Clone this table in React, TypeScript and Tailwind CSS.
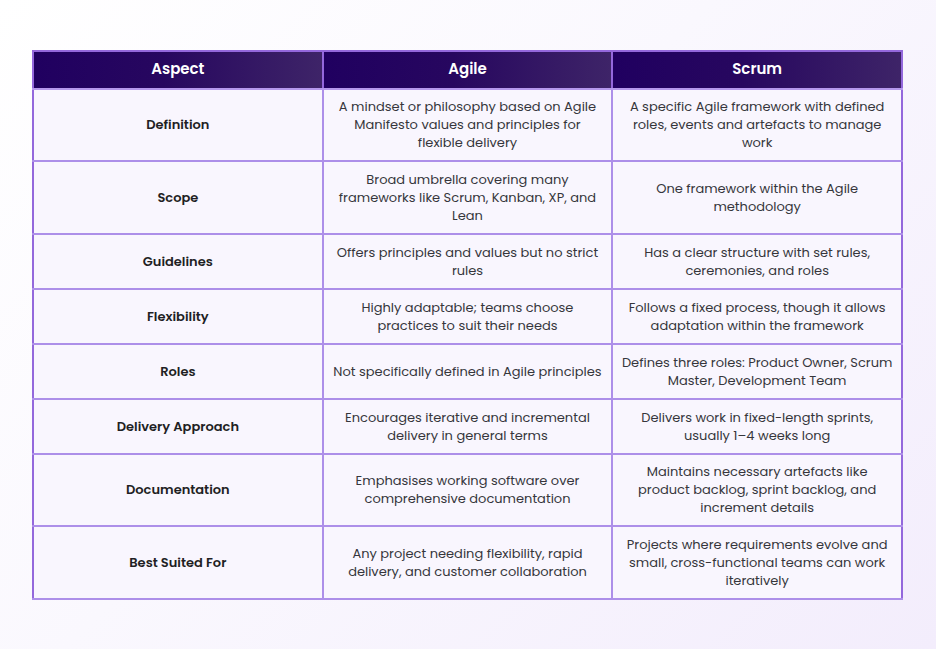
const rows: { aspect: string; agile: string[]; scrum: string[]; h: string }[] = [
  {
    aspect: 'Definition',
    agile: ['A mindset or philosophy based on Agile', 'Manifesto values and principles for', 'flexible delivery'],
    scrum: ['A specific Agile framework with defined', 'roles, events and artefacts to manage', 'work'],
    h: 'h-[72px]',
  },
  {
    aspect: 'Scope',
    agile: ['Broad umbrella covering many', 'frameworks like Scrum, Kanban, XP, and', 'Lean'],
    scrum: ['One framework within the Agile', 'methodology'],
    h: 'h-[73px]',
  },
  {
    aspect: 'Guidelines',
    agile: ['Offers principles and values but no strict', 'rules'],
    scrum: ['Has a clear structure with set rules,', 'ceremonies, and roles'],
    h: 'h-[55px]',
  },
  {
    aspect: 'Flexibility',
    agile: ['Highly adaptable; teams choose', 'practices to suit their needs'],
    scrum: ['Follows a fixed process, though it allows', 'adaptation within the framework'],
    h: 'h-[55px]',
  },
  {
    aspect: 'Roles',
    agile: ['Not specifically defined in Agile principles'],
    scrum: ['Defines three roles: Product Owner, Scrum', 'Master, Development Team'],
    h: 'h-[55px]',
  },
  {
    aspect: 'Delivery Approach',
    agile: ['Encourages iterative and incremental', 'delivery in general terms'],
    scrum: ['Delivers work in fixed-length sprints,', 'usually 1–4 weeks long'],
    h: 'h-[55px]',
  },
  {
    aspect: 'Documentation',
    agile: ['Emphasises working software over', 'comprehensive documentation'],
    scrum: ['Maintains necessary artefacts like', 'product backlog, sprint backlog, and', 'increment details'],
    h: 'h-[72px]',
  },
  {
    aspect: 'Best Suited For',
    agile: ['Any project needing flexibility, rapid', 'delivery, and customer collaboration'],
    scrum: ['Projects where requirements evolve and', 'small, cross-functional teams can work', 'iteratively'],
    h: 'h-[73px]',
  },
];

function Lines({ lines }: { lines: string[] }) {
  return (
    <>
      {lines.map((l, i) => (
        <span key={i} className="block whitespace-nowrap">
          {l}
        </span>
      ))}
    </>
  );
}

export default function App() {
  return (
    <main
      className="w-[936px] h-[649px] overflow-hidden bg-[linear-gradient(135deg,#ffffff_0%,#faf8fe_45%,#f3edfc_100%)] pt-[50px] pl-[32px]"
      style={{ fontFamily: '"Poppins", "Noto Sans", "Open Sans", sans-serif' }}
    >
      <table className="w-[871px] table-fixed border-collapse">
        <thead>
          <tr className="h-[38px]">
            {['Aspect', 'Agile', 'Scrum'].map((h) => (
              <th
                key={h}
                className="border-2 border-[#9468dc] border-b-[#b598ec] bg-[linear-gradient(90deg,#200060_0%,#27075f_45%,#3e2468_100%)] pb-[1px] text-[15px] font-semibold text-white"
              >
                {h}
              </th>
            ))}
          </tr>
        </thead>
        <tbody className="bg-[#f9f6fe] text-[13px] leading-[18px] text-[#36363c]">
          {rows.map((r) => (
            <tr key={r.aspect} className={r.h}>
              <td className="border-2 border-[#ad8fe9] border-l-[#9468dc] text-center font-semibold text-[#1f1f24]">
                {r.aspect}
              </td>
              <td className="border-2 border-[#ad8fe9] border-l-[#9468dc] text-center">
                <Lines lines={r.agile} />
              </td>
              <td className="border-2 border-[#ad8fe9] border-l-[#9468dc] border-r-[#9468dc] text-center">
                <Lines lines={r.scrum} />
              </td>
            </tr>
          ))}
        </tbody>
      </table>
    </main>
  );
}
